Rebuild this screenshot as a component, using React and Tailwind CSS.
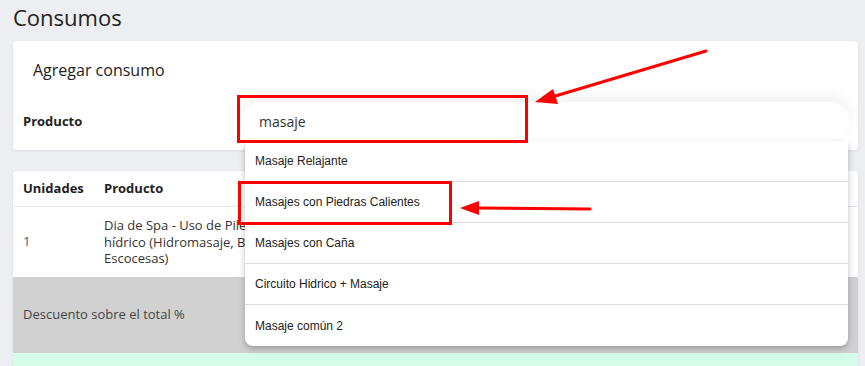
import React from 'react';

const OPTIONS = [
  'Masaje Relajante',
  'Masajes con Piedras Calientes',
  'Masajes con Caña',
  'Circuito Hidrico + Masaje',
  'Masaje común 2',
];

// red markup drawn on top of the screenshot
function Annotations() {
  return (
    <svg className="absolute inset-0 z-20 pointer-events-none" width="865" height="366" viewBox="0 0 865 366">
      <rect x="238.5" y="96.5" width="288" height="45" fill="none" stroke="#ff0000" strokeWidth="3" />
      <rect x="239.5" y="182.5" width="211" height="41" fill="none" stroke="#ff0000" strokeWidth="3" />
      <line x1="706" y1="51" x2="552" y2="97" stroke="#ff0000" strokeWidth="3" strokeLinecap="round" />
      <polygon points="535,102 553,89 558,104" fill="#ff0000" />
      <line x1="590" y1="209" x2="478" y2="208" stroke="#ff0000" strokeWidth="3" strokeLinecap="round" />
      <polygon points="460,208 479,201 479,215" fill="#ff0000" />
    </svg>
  );
}

export default function App() {
  return (
    <div className="relative w-[865px] h-[366px] overflow-hidden bg-[#eceef1]" style={{ fontFamily: '"Open Sans", sans-serif' }}>
      <div className="pl-[13px] pr-[7px]">
        <h1 className="pt-[2px] h-[41px] text-[22px] leading-[30px] text-[#222]">Consumos</h1>

        <div className="relative bg-white rounded-[4px] shadow-[0_1px_3px_rgba(0,0,0,0.08)] h-[109px]">
          <div className="pl-[20px] pt-[17px] text-[16px] leading-[24px] text-[#222]">Agregar consumo</div>
          <div className="flex items-center mt-[20px] pl-[10px]">
            <div className="w-[219px] pt-[2px] text-[13px] font-bold text-[#222]">Producto</div>
            <div className="relative w-[607px]">
              <div className="h-[38px] rounded-full bg-white shadow-[0_-6px_14px_rgba(0,0,0,0.06)] flex items-center pl-[17px] text-[14px] text-[#333]">
                masaje
              </div>
              <div className="absolute z-10 left-[3px] top-[39px] w-[603px] bg-white rounded-b-[8px] shadow-[0_3px_6px_rgba(0,0,0,0.25)]" style={{ fontFamily: '"Liberation Sans", Arial, sans-serif' }}>
                {OPTIONS.map((o, i) => (
                  <div key={o} className={`h-[41px] flex items-center pl-[10px] text-[12px] text-[#222] ${i < OPTIONS.length - 1 ? 'border-b border-[#dddddd]' : ''}`}>
                    {o}
                  </div>
                ))}
              </div>
            </div>
          </div>
        </div>

        <div className="mt-[21px] bg-white rounded-t-[4px] shadow-[0_1px_3px_rgba(0,0,0,0.08)] text-[13px]">
          <div className="flex h-[36px] items-center border-b border-[#e6e6e6] font-bold text-[#222]">
            <div className="w-[91px] pl-[10px]">Unidades</div>
            <div>Producto</div>
          </div>
          <div className="flex h-[70px] items-center text-[#333]">
            <div className="w-[91px] pl-[10px] text-[#555]">1</div>
            <div className="w-[138px] leading-[16.5px] whitespace-nowrap">
              Dia de Spa - Uso de Piletas y circuito<br />
              hídrico (Hidromasaje, Baños Finlandeses, Duchas<br />
              Escocesas)
            </div>
          </div>
          <div className="h-[76px] bg-[#d1d1d1] flex items-center pl-[10px] text-[#444]">
            Descuento sobre el total %
          </div>
          <div className="h-[20px] bg-[#d4fce9]" />
        </div>
      </div>
      <Annotations />
    </div>
  );
}
